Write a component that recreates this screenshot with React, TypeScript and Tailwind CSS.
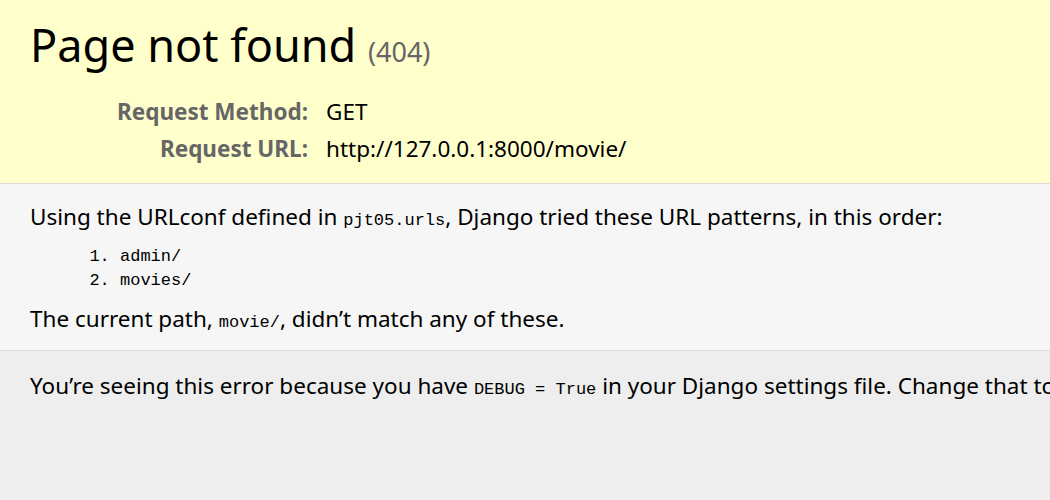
function Mono({ children }: { children: React.ReactNode }) {
  return <code className="font-['Liberation_Mono',monospace] text-[17px] leading-none">{children}</code>;
}

export default function App() {
  return (
    <div className="min-h-screen w-full overflow-hidden bg-[#eee] text-black font-['Noto_Sans','Open_Sans',sans-serif] text-[22.5px]">
      <header id="summary" className="bg-[#ffc] border-b border-[#ddd] px-[30px] pt-[19px] pb-[16px]">
        <h1 className="text-[45px] leading-[52px] font-normal mb-[15px]">
          Page not found <small className="text-[27px] text-[#666]">(404)</small>
        </h1>
        <table className="w-full border-collapse">
          <tbody>
            <tr>
              <th className="w-[295px] text-right align-top text-[#666] font-bold pl-[4px] pr-[17px] py-[3px] leading-[31px]">
                Request Method:
              </th>
              <td className="align-top px-[1px] py-[3px] leading-[31px]">GET</td>
            </tr>
            <tr>
              <th className="w-[295px] text-right align-top text-[#666] font-bold pl-[4px] pr-[17px] py-[3px] leading-[31px]">
                Request URL:
              </th>
              <td className="align-top px-[1px] py-[3px] leading-[31px]">http://127.0.0.1:8000/movie/</td>
            </tr>
          </tbody>
        </table>
      </header>

      <main id="info" className="bg-[#f6f6f6] border-b border-[#ddd] px-[30px] pt-[17px] pb-[15px] leading-[32px]">
        <p>
          Using the URLconf defined in <Mono>pjt05.urls</Mono>, Django tried these URL patterns, in this order:
        </p>
        <ol className="list-decimal mx-[90px] my-[12px] font-['Liberation_Mono',monospace] text-[17px] leading-[24px]">
          <li>admin/</li>
          <li>movies/</li>
        </ol>
        <p className="-mt-[2px]">
          The current path, <Mono>movie/</Mono>, didn’t match any of these.
        </p>
      </main>

      <footer id="explanation" className="px-[30px] pt-[19px] pb-[15px] leading-[32px] whitespace-nowrap">
        <p>
          You’re seeing this error because you have <Mono>DEBUG = True</Mono> in your Django settings file. Change that to <Mono>False</Mono>, and Django will display a standard 404 page.
        </p>
      </footer>
    </div>
  );
}
